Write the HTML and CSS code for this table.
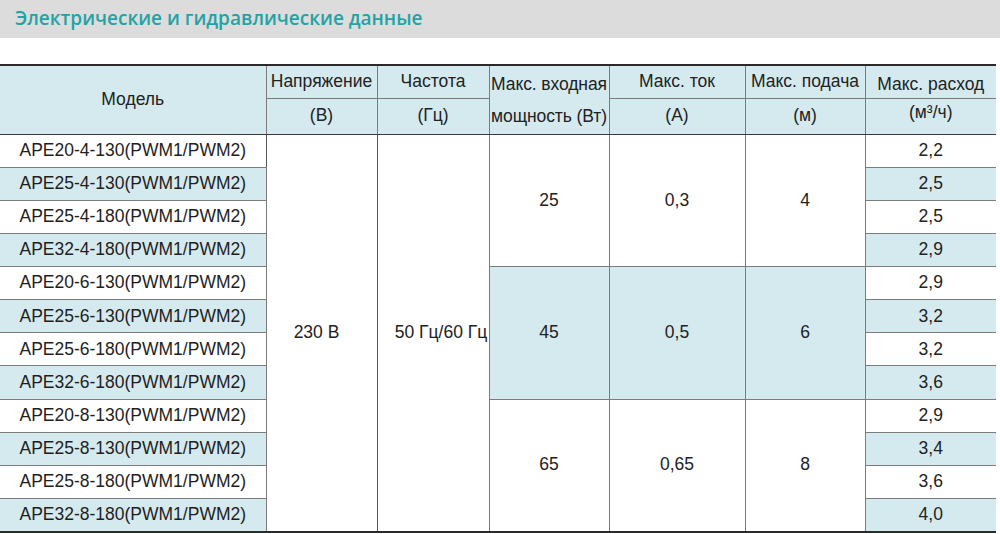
FILE: index.html
```html
<!DOCTYPE html>
<html lang="ru">
<head>
<meta charset="utf-8">
<title>Электрические и гидравлические данные</title>
<link rel="stylesheet" href="styles.css">
</head>
<body>
<header class="band"><h1 class="title">Электрические и гидравлические данные</h1></header>
<table class="spec">
  <colgroup>
    <col class="c-model"><col class="c-volt"><col class="c-freq"><col class="c-pow"><col class="c-cur"><col class="c-head"><col class="c-flow">
  </colgroup>
  <thead>
    <tr class="h1">
      <th rowspan="2" class="h-model">Модель</th>
      <th>Напряжение</th>
      <th>Частота</th>
      <th rowspan="2" class="h-pow"><span class="pl">Макс. входная</span><span class="pl">мощность (Вт)</span></th>
      <th>Макс. ток</th>
      <th>Макс. подача</th>
      <th class="h-flow">Макс. расход</th>
    </tr>
    <tr class="h2">
      <th>(В)</th>
      <th>(Гц)</th>
      <th>(А)</th>
      <th>(м)</th>
      <th class="h-flow2">(м³/ч)</th>
    </tr>
  </thead>
  <tbody>
    <tr><td class="m">APE20-4-130(PWM1/PWM2)</td><td rowspan="12" class="v">230 В</td><td rowspan="12" class="f">50 Гц/60 Гц</td><td rowspan="4">25</td><td rowspan="4">0,3</td><td rowspan="4">4</td><td>2,2</td></tr>
    <tr class="alt"><td class="m">APE25-4-130(PWM1/PWM2)</td><td>2,5</td></tr>
    <tr><td class="m">APE25-4-180(PWM1/PWM2)</td><td>2,5</td></tr>
    <tr class="alt"><td class="m">APE32-4-180(PWM1/PWM2)</td><td>2,9</td></tr>
    <tr><td class="m">APE20-6-130(PWM1/PWM2)</td><td rowspan="4" class="grp">45</td><td rowspan="4" class="grp">0,5</td><td rowspan="4" class="grp">6</td><td>2,9</td></tr>
    <tr class="alt"><td class="m">APE25-6-130(PWM1/PWM2)</td><td>3,2</td></tr>
    <tr><td class="m">APE25-6-180(PWM1/PWM2)</td><td>3,2</td></tr>
    <tr class="alt"><td class="m">APE32-6-180(PWM1/PWM2)</td><td>3,6</td></tr>
    <tr><td class="m">APE20-8-130(PWM1/PWM2)</td><td rowspan="4">65</td><td rowspan="4">0,65</td><td rowspan="4">8</td><td>2,9</td></tr>
    <tr class="alt"><td class="m">APE25-8-130(PWM1/PWM2)</td><td>3,4</td></tr>
    <tr><td class="m">APE25-8-180(PWM1/PWM2)</td><td>3,6</td></tr>
    <tr class="alt last"><td class="m">APE32-8-180(PWM1/PWM2)</td><td>4,0</td></tr>
  </tbody>
</table>
</body>
</html>
```

FILE: styles.css
```css
html, body {
  margin: 0;
  padding: 0;
  background: #ffffff;
}

body {
  width: 1000px;
  height: 534px;
  overflow: hidden;
  font-family: "Liberation Sans", Arial, sans-serif;
  color: #222222;
}

.band {
  height: 38px;
  background: #dcdcdc;
  display: flex;
  align-items: center;
  padding-left: 15px;
}

.title {
  margin: 0;
  font-family: "Open Sans", "Noto Sans", sans-serif;
  font-weight: 600;
  font-size: 19px;
  color: #23a3a6;
  line-height: 1;
  padding-bottom: 1px;
}

.spec {
  margin-top: 26px;
  width: 996px;
  border-collapse: collapse;
  table-layout: fixed;
  font-size: 17.5px;
  border-top: 2px solid #2a2a2a;
  border-bottom: 2px solid #2a2a2a;
}

.c-model { width: 266px; }
.c-volt { width: 111px; }
.c-freq { width: 112px; }
.c-pow { width: 120px; }
.c-cur { width: 136px; }
.c-head { width: 120px; }
.c-flow { width: 131px; }

.spec th, .spec td {
  padding: 0;
  text-align: center;
  vertical-align: middle;
  line-height: 1;
  white-space: nowrap;
  border: 1px solid #7c7c7c;
  font-weight: normal;
}

.spec th:first-child, .spec td:first-child { border-left: none; }
.spec tr > :last-child { border-right: none; }

.spec thead th {
  background: #d5eaef;
}

.spec thead tr.h1 { height: 33px; }
.spec thead tr.h2 { height: 36px; }

.spec thead tr.h2 th { border-bottom: 1px solid #3a3a3a; }
.spec thead th.h-model, .spec thead th.h-pow { border-bottom: 1px solid #3a3a3a; }

.h-pow .pl {
  display: block;
  line-height: 32px;
  letter-spacing: -0.1px;
}

.spec thead th.h-flow { padding-top: 6px; }
.spec thead th.h-flow2 { padding-bottom: 6px; }

.spec tbody tr { height: 33.15px; }

.spec tbody tr.alt td.m,
.spec tbody tr.alt td:last-child {
  background: #d5eaef;
}

.spec td.grp { background: #d5eaef; }

.spec td.m { color: #1e1e1e; border-right: 1px solid #555555; }
.spec td.v { padding-right: 10px; border-right: 1px solid #555555; }
.spec td.f { padding-left: 16px; }
```
